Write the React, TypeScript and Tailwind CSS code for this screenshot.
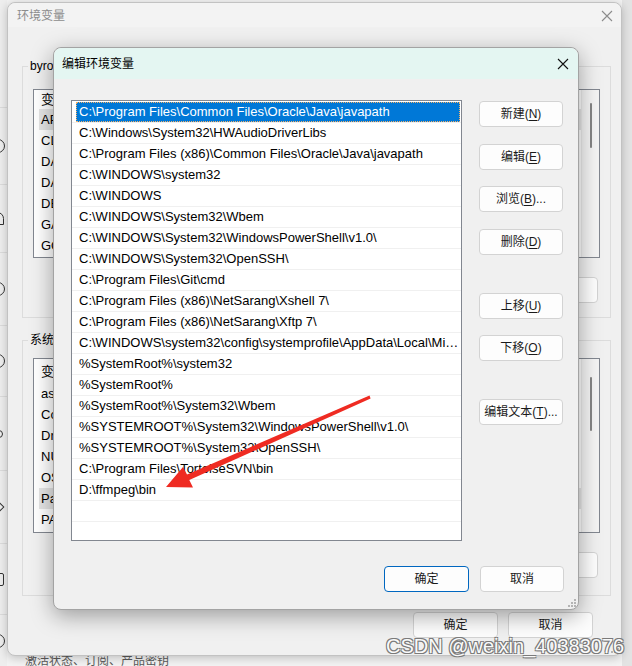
import React from 'react';

const PATHS = [
  'C:\\Program Files\\Common Files\\Oracle\\Java\\javapath',
  'C:\\Windows\\System32\\HWAudioDriverLibs',
  'C:\\Program Files (x86)\\Common Files\\Oracle\\Java\\javapath',
  'C:\\WINDOWS\\system32',
  'C:\\WINDOWS',
  'C:\\WINDOWS\\System32\\Wbem',
  'C:\\WINDOWS\\System32\\WindowsPowerShell\\v1.0\\',
  'C:\\WINDOWS\\System32\\OpenSSH\\',
  'C:\\Program Files\\Git\\cmd',
  'C:\\Program Files (x86)\\NetSarang\\Xshell 7\\',
  'C:\\Program Files (x86)\\NetSarang\\Xftp 7\\',
  'C:\\WINDOWS\\system32\\config\\systemprofile\\AppData\\Local\\Microsoft\\WindowsApps',
  '%SystemRoot%\\system32',
  '%SystemRoot%',
  '%SystemRoot%\\System32\\Wbem',
  '%SYSTEMROOT%\\System32\\WindowsPowerShell\\v1.0\\',
  '%SYSTEMROOT%\\System32\\OpenSSH\\',
  'C:\\Program Files\\TortoiseSVN\\bin',
  'D:\\ffmpeg\\bin',
  '',
  '',
];

const USER_VARS = ['APPDATA_HOME', 'CLASSPATH', 'DASHSCOPE_API_KEY', 'DATA_PATH', 'DEBUG', 'GAME_HOME', 'GOPATH'];
const SYS_VARS = ['asl.log', 'ComSpec', 'DriverData', 'NUMBER_OF_PROCESSORS', 'OS', 'Path', 'PATHEXT'];

// settings app sidebar behind the windows, only a sliver shows
const SIDE = [
  { h: 107, icon: '' },
  { h: 77, icon: 'circle' },
  { h: 68, icon: 'bell' },
  { h: 73, icon: 'circle' },
  { h: 71, icon: 'circle' },
  { h: 74, icon: 'dot' },
  { h: 73, icon: 'diamond' },
  { h: 71, icon: 'square' },
  { h: 52, icon: 'circle' },
];

const CloseX = ({ color }: { color: string }) => (
  <svg width="12" height="12" viewBox="0 0 12 12">
    <path d="M1 1L11 11M11 1L1 11" stroke={color} strokeWidth="1.1" />
  </svg>
);

interface BtnProps {
  label: string;
  hot?: string;
  tail?: string;
  primary?: boolean;
  width?: string;
}

const Btn: React.FC<BtnProps> = ({ label, hot, tail, primary, width }) => (
  <button
    className={`flex h-[26px] shrink-0 items-center justify-center rounded-[4px] border bg-[#fdfdfd] text-[12px] text-[#1a1a1a] ${
      primary ? 'border-[#0067c0]' : 'border-[#d3d3d3]'
    } ${width ?? 'w-[84px]'}`}
  >
    {label}
    {hot && (
      <>
        (<span className="underline underline-offset-2">{hot}</span>)
      </>
    )}
    {tail}
  </button>
);

const Grip = () => (
  <div className="grid grid-cols-3 gap-[1px]">
    {[0, 0, 1, 0, 1, 1, 1, 1, 1].map((v, i) => (
      <div key={`g-${i}`} className={`h-[2px] w-[2px] ${v ? 'bg-[#b4b4b4]' : ''}`}></div>
    ))}
  </div>
);

const BgList: React.FC<{ names: string[]; sel: number; header: string; thumb: string }> = ({
  names,
  sel,
  header,
  thumb,
}) => (
  <div className={`flex overflow-hidden border border-[#828790] bg-white ${header}`}>
    <div className="flex-1 pl-[5px] pt-[1px] text-[13px]">
      <div className="flex h-[18px] items-center pl-[2px]">变量</div>
      {names.map((n, i) => (
        <div
          key={n}
          className={`flex h-[21px] items-center pl-[2px] ${i === sel ? 'bg-[#e5e5e5]' : ''}`}
        >
          {n}
        </div>
      ))}
    </div>
    <div className="flex w-[18px] justify-center border-l border-[#ececec] bg-[#f4f4f4]">
      <div className={`w-[2px] rounded-full bg-[#858585] ${thumb}`}></div>
    </div>
  </div>
);

export default function App() {
  return (
    <div className="relative h-[666px] w-[632px] overflow-hidden bg-[#f3f3f3] font-['Liberation_Sans','Noto_Sans_CJK_SC',sans-serif] text-black">
      {/* settings app in the back */}
      <div className="flex h-full">
        <div className="flex w-[7px] flex-col overflow-hidden bg-[#eeeeee]">
          {SIDE.map((s, i) => (
            <div
              key={`side-${i}`}
              className={`flex shrink-0 items-center ${i > 0 ? 'border-t border-[#dcdcdc]' : ''}`}
              style={{ height: s.h }}
            >
              {s.icon === 'circle' && <div className="-ml-[9px] h-[14px] w-[14px] rounded-full border-[1.5px] border-[#333]"></div>}
              {s.icon === 'bell' && <div className="-ml-[9px] h-[13px] w-[13px] rounded-t-full border-[1.5px] border-[#333]"></div>}
              {s.icon === 'dot' && <div className="-ml-[5px] h-[8px] w-[8px] rounded-full border-[1.5px] border-[#333]"></div>}
              {s.icon === 'diamond' && <div className="-ml-[10px] h-[12px] w-[12px] rotate-45 border-[1.5px] border-[#333]"></div>}
              {s.icon === 'square' && <div className="-ml-[9px] h-[13px] w-[13px] rounded-[2px] border-[1.5px] border-[#333]"></div>}
            </div>
          ))}
        </div>
        <div className="flex flex-1 flex-col justify-end">
          <div className="-mb-[3px] pl-[18px] text-[12px] leading-[16px] text-[#5a5a5a]">激活状态、订阅、产品密钥</div>
        </div>
        <div className="w-[10px] bg-[#e3e3e3]"></div>
      </div>

      {/* 环境变量 window (inactive) */}
      <div className="absolute left-[7px] top-[2px] flex h-[654px] w-[615px] flex-col rounded-[8px] border border-[#c2c2c2] bg-[#f0f0f0] shadow-[0_2px_10px_rgba(0,0,0,0.22)]">
        <div className="flex h-[24px] items-center justify-between rounded-t-[8px] bg-[#f3f3f3] pl-[9px] pr-[8px] pt-[1px] text-[12px] text-[#8c8c8c]">
          <span>环境变量</span>
          <CloseX color="#8c8c8c" />
        </div>

        <fieldset className="ml-[14px] mt-[31px] w-[589px] border border-[#dcdcdc]">
          <legend className="ml-[5px] px-[2px] text-[12px] leading-[16px]">byron 的用户变量(U)</legend>
          <div className="px-[10px] pb-[14px]">
            <div className="mt-[15px]">
              <BgList names={USER_VARS} sel={0} header="h-[169px]" thumb="mt-[13px] h-[45px]" />
            </div>
            <div className="mt-[19px] flex justify-end gap-[10px] pr-[2px]">
              <Btn label="新建" hot="N" tail="..." width="w-[85px]" />
              <Btn label="编辑" hot="E" tail="..." width="w-[85px]" />
              <Btn label="删除" hot="D" width="w-[85px]" />
            </div>
          </div>
        </fieldset>

        <fieldset className="ml-[14px] mt-[14px] w-[589px] border border-[#dcdcdc]">
          <legend className="ml-[5px] px-[2px] text-[12px] leading-[16px]">系统变量(S)</legend>
          <div className="px-[10px] pb-[17px]">
            <div className="mt-[10px]">
              <BgList names={SYS_VARS} sel={5} header="h-[175px] [&>div:first-child>div:first-child]:h-[23px]" thumb="mt-[18px] h-[54px]" />
            </div>
            <div className="mt-[19px] flex justify-end gap-[10px] pr-[2px]">
              <Btn label="新建" hot="W" tail="..." width="w-[85px]" />
              <Btn label="编辑" hot="I" tail="..." width="w-[85px]" />
              <Btn label="删除" hot="L" width="w-[85px]" />
            </div>
          </div>
        </fieldset>

        <div className="mt-[16px] flex justify-end gap-[10px] pr-[28px]">
          <Btn label="确定" width="w-[85px]" />
          <Btn label="取消" width="w-[85px]" />
        </div>
        <div className="absolute bottom-[2px] right-[2px]">
          <Grip />
        </div>
      </div>

      {/* 编辑环境变量 dialog */}
      <div className="absolute left-[53px] top-[47px] flex h-[563px] w-[526px] flex-col rounded-[8px] border border-[#a3a3a3] bg-[#f0f0f0] shadow-[0_6px_22px_rgba(0,0,0,0.35)]">
        <div className="flex h-[31px] items-center justify-between rounded-t-[8px] bg-[#e4f6f2] pl-[8px] pr-[9px]">
          <span className="text-[12px]">编辑环境变量</span>
          <CloseX color="#111" />
        </div>

        <div className="flex pl-[17px] pt-[21px]">
          <div className="h-[441px] w-[391px] overflow-hidden border border-[#828790] bg-white pt-[1px] text-[13px]">
            {PATHS.map((p, i) => (
              <div key={`row-${i}`} className="flex h-[21px] border-b border-[#f0f0f0] pl-[4px] pr-[1px]">
                <div
                  className={`min-w-0 flex-1 truncate pl-[3px] leading-[20px] ${
                    i === 0
                      ? 'bg-[#0078d7] text-white outline outline-1 -outline-offset-1 outline-dotted outline-[#f7b267]'
                      : ''
                  }`}
                >
                  {p}
                </div>
              </div>
            ))}
          </div>

          <div className="ml-[17px] flex flex-col">
            <div className="mt-[1px]"><Btn label="新建" hot="N" /></div>
            <div className="mt-[17px]"><Btn label="编辑" hot="E" /></div>
            <div className="mt-[16px]"><Btn label="浏览" hot="B" tail="..." /></div>
            <div className="mt-[17px]"><Btn label="删除" hot="D" /></div>
            <div className="mt-[38px]"><Btn label="上移" hot="U" /></div>
            <div className="mt-[16px]"><Btn label="下移" hot="O" /></div>
            <div className="mt-[38px]"><Btn label="编辑文本" hot="T" tail="..." /></div>
          </div>
        </div>

        <div className="mt-[25px] flex justify-end gap-[11px] pr-[14px]">
          <Btn label="确定" primary width="w-[85px]" />
          <Btn label="取消" />
        </div>
        <div className="absolute bottom-[2px] right-[2px]">
          <Grip />
        </div>
      </div>

      {/* red annotation arrow */}
      <svg className="pointer-events-none absolute left-0 top-0" width="632" height="666" viewBox="0 0 632 666">
        <polygon
          points="166,487 183,467 187,474.5 369.5,395.6 370.6,398.4 189.3,480 193,487.5"
          fill="#ef2b22"
        />
      </svg>

      {/* watermark */}
      <div className="pointer-events-none absolute left-[386px] top-[634px] text-[20px] leading-[24px] text-[#fafafa] [text-shadow:1px_1px_0_#7a7a7a,-1px_-1px_0_#7a7a7a,1px_-1px_0_#7a7a7a,-1px_1px_0_#7a7a7a]">
        CSDN @weixin_40383076
      </div>
    </div>
  );
}
